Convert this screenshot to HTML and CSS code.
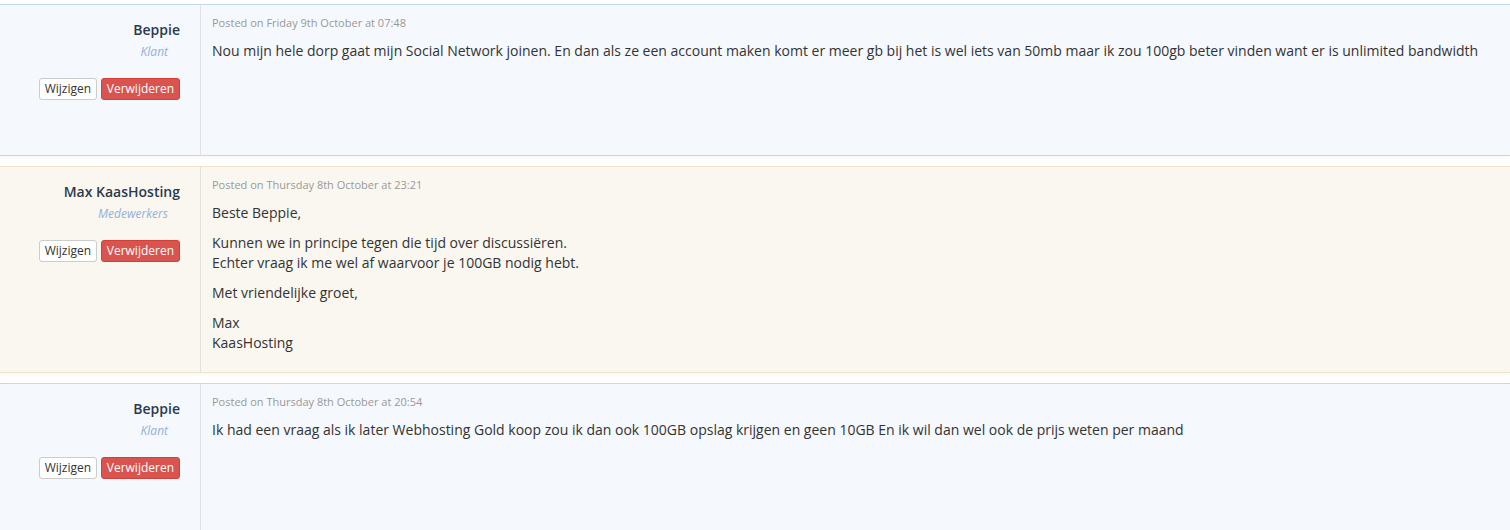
FILE: index.html
```html
<!DOCTYPE html>
<html lang="nl">
<head>
    <meta charset="UTF-8">
    <title>Ticket - Reacties</title>
    <link rel="stylesheet" href="styles.css">
</head>
<body>
    <div class="replies">
        <div class="reply client">
            <div class="reply-user">
                <div class="name">Beppie</div>
                <div class="role">Klant</div>
                <div class="actions">
                    <a class="btn btn-default">Wijzigen</a>
                    <a class="btn btn-danger">Verwijderen</a>
                </div>
            </div>
            <div class="reply-body">
                <div class="date">Posted on Friday 9th October at 07:48</div>
                <p>Nou mijn hele dorp gaat mijn Social Network joinen. En dan als ze een account maken komt er meer gb bij het is wel iets van 50mb maar ik zou 100gb beter vinden want er is unlimited bandwidth</p>
            </div>
        </div>

        <div class="reply staff">
            <div class="reply-user">
                <div class="name">Max KaasHosting</div>
                <div class="role">Medewerkers</div>
                <div class="actions">
                    <a class="btn btn-default">Wijzigen</a>
                    <a class="btn btn-danger">Verwijderen</a>
                </div>
            </div>
            <div class="reply-body">
                <div class="date">Posted on Thursday 8th October at 23:21</div>
                <p>Beste Beppie,</p>
                <p>Kunnen we in principe tegen die tijd over discussiëren.<br>Echter vraag ik me wel af waarvoor je 100GB nodig hebt.</p>
                <p>Met vriendelijke groet,</p>
                <p>Max<br>KaasHosting</p>
            </div>
        </div>

        <div class="reply client">
            <div class="reply-user">
                <div class="name">Beppie</div>
                <div class="role">Klant</div>
                <div class="actions">
                    <a class="btn btn-default">Wijzigen</a>
                    <a class="btn btn-danger">Verwijderen</a>
                </div>
            </div>
            <div class="reply-body">
                <div class="date">Posted on Thursday 8th October at 20:54</div>
                <p>Ik had een vraag als ik later Webhosting Gold koop zou ik dan ook 100GB opslag krijgen en geen 10GB En ik wil dan wel ook de prijs weten per maand</p>
            </div>
        </div>
    </div>
</body>
</html>
```

FILE: styles.css
```css
* {
    margin: 0;
    padding: 0;
    box-sizing: border-box;
}

body {
    font-family: 'Open Sans', 'Liberation Sans', sans-serif;
    font-size: 14px;
    line-height: 20px;
    color: #333;
    background: #fff;
}

.replies {
    padding-top: 4px;
}

.reply {
    display: flex;
    min-height: 152px;
    margin-bottom: 10px;
    border-top: 1px solid #c6d7ef;
    border-bottom: 1px solid #c6d7ef;
    box-shadow: 0 2px 3px rgba(0, 0, 0, 0.03);
}

.reply.client {
    background: #f5f8fc;
}

.reply.staff {
    background: #faf7f0;
    border-color: #f0e4c8;
}

.reply-user {
    width: 201px;
    flex-shrink: 0;
    padding: 15px 20px 10px 10px;
    border-right: 1px solid #e1e1e1;
    text-align: right;
}

.name {
    font-weight: 600;
    color: #2b3a4e;
}

.role {
    font-size: 12px;
    line-height: 16px;
    font-style: italic;
    color: #93b0da;
    padding-right: 12px;
    margin-top: 4px;
}

.actions {
    margin-top: 18px;
}

.btn {
    display: inline-block;
    font-size: 12px;
    line-height: 18px;
    padding: 1px 5px;
    border: 1px solid #ccc;
    border-radius: 3px;
    cursor: pointer;
}

.btn-default {
    background: #fff;
    color: #333;
}

.btn-danger {
    background: #d9534f;
    border-color: #d43f3a;
    color: #fff;
}

.reply-body {
    flex: 1;
    padding: 10px 12px 9px 11px;
}

.date {
    font-size: 11px;
    line-height: 16px;
    color: #999;
    margin-bottom: 10px;
}

.reply-body p {
    margin-bottom: 10px;
}
```
